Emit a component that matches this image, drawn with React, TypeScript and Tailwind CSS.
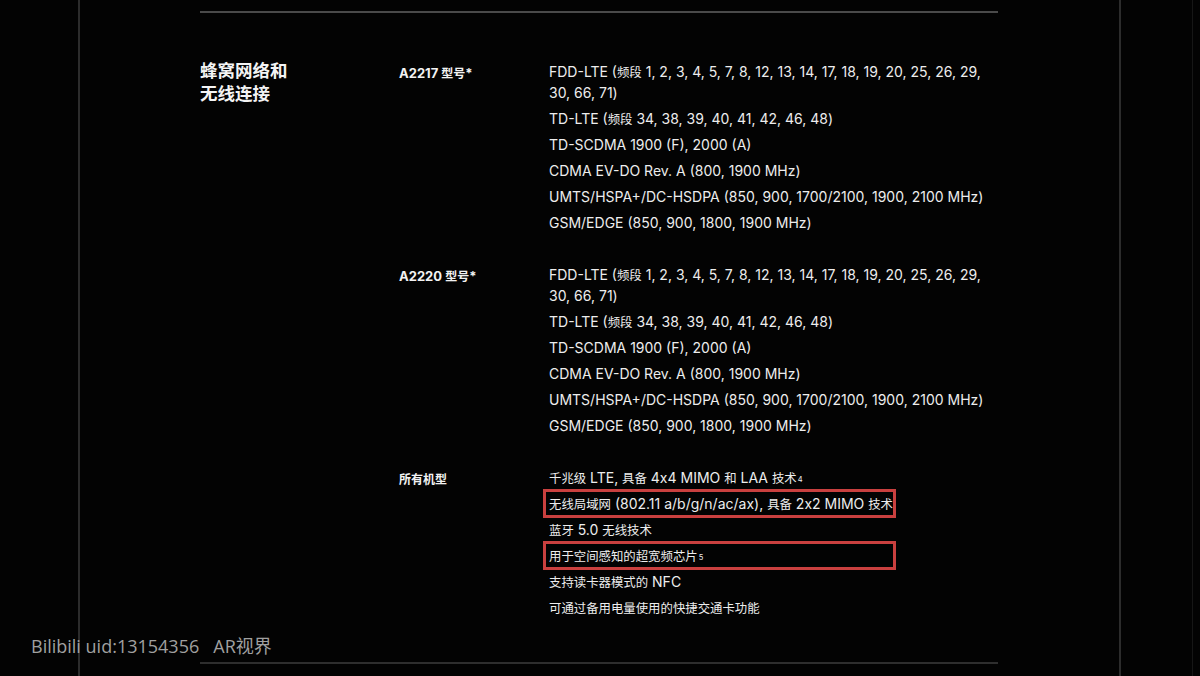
import React from "react";

const font = { fontFamily: '"Inter","Noto Sans CJK SC",sans-serif' };

const a2217 = [
  "FDD-LTE (频段 1, 2, 3, 4, 5, 7, 8, 12, 13, 14, 17, 18, 19, 20, 25, 26, 29, 30, 66, 71)",
  "TD-LTE (频段 34, 38, 39, 40, 41, 42, 46, 48)",
  "TD-SCDMA 1900 (F), 2000 (A)",
  "CDMA EV-DO Rev. A (800, 1900 MHz)",
  "UMTS/HSPA+/DC-HSDPA (850, 900, 1700/2100, 1900, 2100 MHz)",
  "GSM/EDGE (850, 900, 1800, 1900 MHz)",
];

type Item = { text: string; sup?: string; boxed?: boolean };

const all: Item[] = [
  { text: "千兆级 LTE, 具备 4x4 MIMO 和 LAA 技术", sup: "4" },
  { text: "无线局域网 (802.11 a/b/g/n/ac/ax), 具备 2x2 MIMO 技术", boxed: true },
  { text: "蓝牙 5.0 无线技术" },
  { text: "用于空间感知的超宽频芯片", sup: "5", boxed: true },
  { text: "支持读卡器模式的 NFC" },
  { text: "可通过备用电量使用的快捷交通卡功能" },
];

function Mixed({ text, cjk }: { text: string; cjk: string }) {
  const parts = text.split(/([\u3000-\u9fff\uff00-\uffef]+)/);
  return (
    <>
      {parts.map((p, i) =>
        /[\u3000-\u9fff\uff00-\uffef]/.test(p) ? (
          <span key={i} className={cjk}>
            {p}
          </span>
        ) : (
          <React.Fragment key={i}>{p}</React.Fragment>
        )
      )}
    </>
  );
}

function Row({ label, items }: { label: string; items: Item[] }) {
  return (
    <div className="flex">
      <div className="w-[150px] shrink-0 pt-[3px] text-[13px] font-bold leading-[18px] text-[#f2f2f2]">
        <Mixed text={label} cjk="text-[12px] leading-[12px]" />
      </div>
      <ul className="flex w-[449px] flex-col gap-[5px]">
        {items.map((it, i) => (
          <li key={i} className="relative text-[14px] leading-[21px] text-[#ededed]">
            <Mixed text={it.text} cjk="text-[12.4px] leading-[12px]" />
            {it.sup && <sup className="relative top-[-1px] ml-[1px] text-[7.5px] leading-[0]">{it.sup}</sup>}
            {it.boxed && (
              <span className="absolute left-[-6px] top-[-4px] h-[29px] w-[353px] border-[3px] border-[#c9403f]" />
            )}
          </li>
        ))}
      </ul>
    </div>
  );
}

export default function App() {
  return (
    <div className="relative flex h-[676px] w-[1200px] overflow-hidden bg-[#030303]" style={font}>
      <div className="w-[78px] shrink-0" />
      <div className="flex w-[1043px] shrink-0 flex-col border-x-2 border-x-[#2c2c2c] pl-[120px]">
        <div className="mt-[11px] h-[2px] w-[798px] bg-[#4a4a4a]" />
        <div className="flex h-[649px] pt-[46px]">
          <h2 className="w-[199px] shrink-0 text-[17.5px] font-bold leading-[23px] text-[#f4f4f4]">
            蜂窝网络和
            <br />
            无线连接
          </h2>
          <div className="flex flex-col gap-[31px] pt-[2px]">
            <Row label="A2217 型号*" items={a2217.map((t) => ({ text: t }))} />
            <Row label="A2220 型号*" items={a2217.map((t) => ({ text: t }))} />
            <Row label="所有机型" items={all} />
          </div>
        </div>
        <div className="h-[2px] w-[798px] bg-[#2e2e2e]" />
      </div>
      <div className="w-[72px] shrink-0 border-r border-r-[#161616]" />
      <div className="absolute left-[31px] top-[634px] whitespace-pre text-[18px] leading-[24px] text-[#a0a0a0]" style={{ fontFamily: '"Open Sans","Noto Sans CJK SC",sans-serif' }}>
        {"Bilibili uid:13154356   AR视界"}
      </div>
    </div>
  );
}
